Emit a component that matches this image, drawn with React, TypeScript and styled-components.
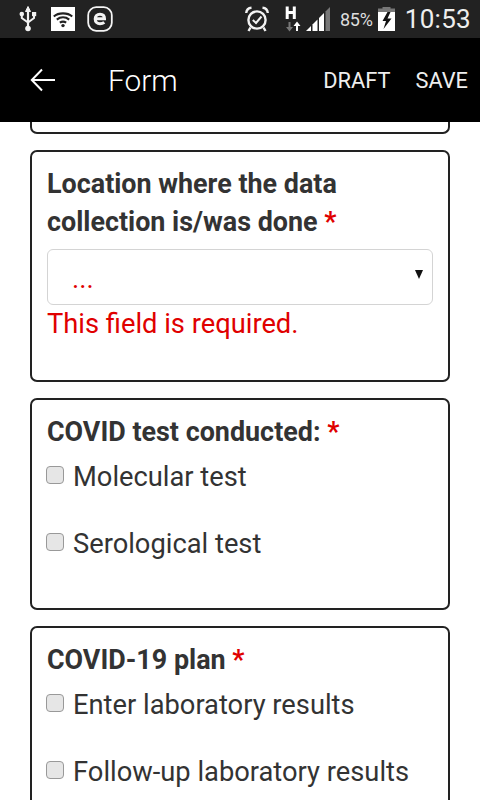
import React from "react";
import styled, { createGlobalStyle } from "styled-components";

const Global = createGlobalStyle`
  html, body { margin: 0; padding: 0; background: #fff; }
  body { font-family: Roboto, "Liberation Sans", sans-serif; color: #333; }
`;
const Screen = styled.div`
  width: 480px; height: 800px; overflow: hidden; display: flex; flex-direction: column;
`;
const StatusBar = styled.div`
  height: 38px; flex: none; background: #222; display: flex; align-items: center; color: #eee;
  padding: 0 9px 0 19px; box-sizing: border-box;
`;
const StatusLeft = styled.div`display: flex; align-items: center; gap: 12px; flex: 1;`;
const StatusRight = styled.div`display: flex; align-items: center;`;
const Percent = styled.span`font-size: 18px; margin: 0 5px 0 10px; color: #ddd; letter-spacing: -0.2px;`;
const Clock = styled.span`font-size: 26px; margin-left: 10px; color: #eee; letter-spacing: 0.3px;`;
const Header = styled.header`
  height: 84px; flex: none; background: #000; color: #fff; display: flex; align-items: center;
  padding: 0 12px 0 30px; box-sizing: border-box;
`;
const Title = styled.h1`
  font: 300 29.8px Roboto, sans-serif; margin: 0 0 0 52px; flex: 1;
`;
const Action = styled.span`font-size: 21.8px; font-weight: 400; margin-left: 25px; color: #eee;`;
const Content = styled.main`
  flex: 1; overflow: hidden; padding: 0 30px; display: flex; flex-direction: column; gap: 16px;
`;
const Stub = styled.div`
  height: 12px; flex: none; border: 2px solid #222; border-top: 0; border-radius: 0 0 7px 7px; box-sizing: border-box;
`;
const Card = styled.section<{ $h: number }>`
  flex: none; height: ${p => p.$h}px; box-sizing: border-box; border: 2px solid #222; border-radius: 7px;
  padding: 13px 15px 0;
`;
const Label = styled.div`
  font-size: 26.9px; font-weight: 700; line-height: 38px; color: #333;
`;
const Req = styled.span`color: #e00000;`;
const Select = styled.div`
  height: 56px; margin-top: 8px; box-sizing: border-box; border: 1.5px solid #d4d4d4; border-radius: 6px;
  display: flex; align-items: center; justify-content: space-between; padding: 3px 9px 0 24px;
  color: #e00000; font-size: 27.3px;
`;
const Caret = styled.span`
  width: 0; height: 0; border-left: 4.5px solid transparent; border-right: 4.5px solid transparent;
  border-top: 9px solid #111; margin-top: -9px;
`;
const ErrorText = styled.div`color: #e00000; font-size: 27.3px; line-height: 38px;`;
const Options = styled.div`display: flex; flex-direction: column; gap: 29px; margin-top: 7px;`;
const Option = styled.label`
  display: flex; align-items: center; height: 38px; font-size: 27.3px; color: #333; gap: 9px;
`;
const Box = styled.span`
  width: 18px; height: 18px; box-sizing: border-box; flex: none; border: 1.5px solid #999;
  border-radius: 4px; background: #e6e6e6; margin-top: -4px; margin-left: -1px;
`;
const Gap = styled.span<{ $w: number }>`width: ${p => p.$w}px;`;

const Usb = () => (
  <svg width="20" height="26" viewBox="0 0 20 26" fill="#f2f2f2" stroke="#f2f2f2">
    <path d="M9 0.5 L11.5 5.5 H6.5 Z" strokeWidth="1" />
    <path d="M9 5 V22" strokeWidth="2.2" fill="none" />
    <path d="M2.8 8 V12 L9 16.5 M15 8 V12 L9 16.5" strokeWidth="2" fill="none" />
    <circle cx="2.8" cy="8" r="2.3" stroke="none" />
    <rect x="13" y="6" width="4.2" height="4.2" stroke="none" />
    <circle cx="9" cy="22.5" r="2.8" stroke="none" />
  </svg>
);
const Wifi = () => (
  <svg width="24" height="24" viewBox="0 0 24 24">
    <rect width="24" height="24" fill="#fff" />
    <path d="M2.8 9.5 C7.5 5.3 16.5 5.3 21.2 9.5 M5.8 12.6 C9.5 9.6 14.5 9.6 18.2 12.6 M8.8 15.6 C10.8 14.3 13.2 14.3 15.2 15.6" fill="none" stroke="#222" strokeWidth="2.1" />
    <circle cx="12" cy="18.6" r="1.7" fill="#222" />
  </svg>
);
const EBadge = () => (
  <svg width="26" height="26" viewBox="0 0 26 26">
    <rect x="1.2" y="1.2" width="23.6" height="23.6" rx="8" fill="none" stroke="#f4f4f4" strokeWidth="1.8" />
    <path d="M8.5 12.8 H17.5 C17.5 9.6 15.8 8.2 13 8.2 C10 8.2 8.2 10.2 8.2 13 C8.2 16 10.2 17.8 13 17.8 C14.8 17.8 16.2 17.3 17.3 16.4" fill="none" stroke="#f4f4f4" strokeWidth="3" />
  </svg>
);
const Alarm = () => (
  <svg width="24" height="26" viewBox="0 0 24 26" fill="none" stroke="#f2f2f2" strokeWidth="2.4">
    <circle cx="12" cy="14" r="8.6" />
    <path d="M7.8 14 L11 17 L16.5 10.5" strokeWidth="2" />
    <path d="M1.2 7 C1.5 4 3.5 2 6.5 1.8 M22.8 7 C22.5 4 20.5 2 17.5 1.8 M5.5 21.5 L3.5 25 M18.5 21.5 L20.5 25" />
  </svg>
);
const Network = () => (
  <svg width="16" height="26" viewBox="0 0 16 26">
    <path d="M2.2 0.5 V13 M9.3 0.5 V13 M2.2 6.5 H9.3" stroke="#fff" strokeWidth="3" fill="none" />
    <path d="M3.5 16 V21 H1 L4.5 25.5 L8 21 H5.5 V16 Z" fill="#777" />
    <path d="M11 25 V20 H8.5 L12 15.5 L15.5 20 H13 V25 Z" fill="#fff" />
  </svg>
);
const Signal = () => (
  <svg width="24" height="26" viewBox="0 0 24 26">
    <path d="M0 25 L5 20 V25 Z" fill="#fff" />
    <path d="M6.5 18.5 L11.5 13.5 V25 H6.5 Z" fill="#fff" />
    <path d="M13 12 L18 7 V25 H13 Z" fill="#fff" />
    <path d="M19.5 5.5 L24 1 V25 H19.5 Z" fill="#777" />
  </svg>
);
const Battery = () => (
  <svg width="17" height="24" viewBox="0 0 17 24">
    <rect x="4.5" y="0" width="8" height="2" fill="#777" />
    <rect x="0" y="1.5" width="17" height="4" fill="#777" />
    <rect x="0" y="5" width="17" height="19" fill="#fff" />
    <path d="M9.5 5 L4.5 14 H8 L5.5 22 L13.5 11.5 H9.5 L12.5 5 Z" fill="#111" />
  </svg>
);
const BackArrow = () => (
  <svg width="26" height="26" viewBox="0 0 26 26" fill="none" stroke="#fff" strokeWidth="2">
    <path d="M25 13 H2 M12 2.5 L1.8 13 L12 23.5" />
  </svg>
);

export default function App() {
  return (
    <Screen>
      <Global />
      <StatusBar>
        <StatusLeft><Usb /><Wifi /><EBadge /></StatusLeft>
        <StatusRight>
          <Alarm />
          <Gap $w={16} />
          <Network />
          <Gap $w={5} />
          <Signal />
          <Percent>85%</Percent>
          <Battery />
          <Clock>10:53</Clock>
        </StatusRight>
      </StatusBar>
      <Header>
        <BackArrow />
        <Title>Form</Title>
        <Action>DRAFT</Action>
        <Action>SAVE</Action>
      </Header>
      <Content>
        <Stub />
        <Card $h={232}>
          <Label>Location where the data<br />collection is/was done <Req>*</Req></Label>
          <Select>...<Caret /></Select>
          <ErrorText>This field is required.</ErrorText>
        </Card>
        <Card $h={212}>
          <Label>COVID test conducted: <Req>*</Req></Label>
          <Options>
            <Option><Box />Molecular test</Option>
            <Option><Box />Serological test</Option>
          </Options>
        </Card>
        <Card $h={212}>
          <Label>COVID-19 plan <Req>*</Req></Label>
          <Options>
            <Option><Box />Enter laboratory results</Option>
            <Option><Box />Follow-up laboratory results</Option>
          </Options>
        </Card>
      </Content>
    </Screen>
  );
}
